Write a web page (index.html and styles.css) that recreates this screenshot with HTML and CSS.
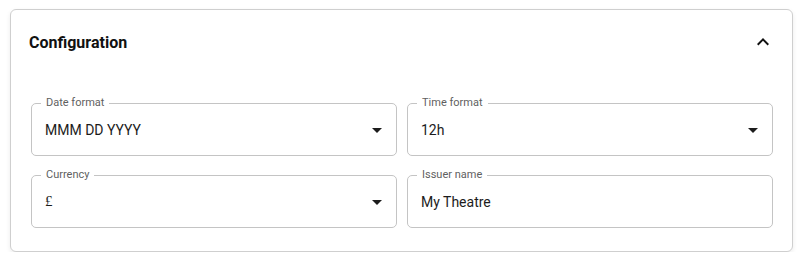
FILE: index.html
```html
<!DOCTYPE html>
<html lang="en">
<head>
    <meta charset="UTF-8">
    <meta name="viewport" content="width=device-width, initial-scale=1.0">
    <title>Configuration</title>
    <link rel="stylesheet" href="styles.css">
</head>
<body>
    <div class="panel">
        <div class="panel-header">
            <h2>Configuration</h2>
            <svg class="icon" viewBox="0 0 24 24" width="24" height="24"><path d="M12 8l-6 6 1.41 1.41L12 10.83l4.59 4.58L18 14z"/></svg>
        </div>

        <div class="panel-body">
            <div class="field">
                <label>Date format</label>
                <span class="value">MMM DD YYYY</span>
                <svg class="arrow" viewBox="0 0 24 24" width="24" height="24"><path d="M7 10l5 5 5-5z"/></svg>
            </div>

            <div class="field">
                <label>Time format</label>
                <span class="value">12h</span>
                <svg class="arrow" viewBox="0 0 24 24" width="24" height="24"><path d="M7 10l5 5 5-5z"/></svg>
            </div>

            <div class="field">
                <label>Currency</label>
                <span class="value pound">£</span>
                <svg class="arrow" viewBox="0 0 24 24" width="24" height="24"><path d="M7 10l5 5 5-5z"/></svg>
            </div>

            <div class="field">
                <label>Issuer name</label>
                <span class="value">My Theatre</span>
            </div>
        </div>
    </div>
</body>
</html>
```

FILE: styles.css
```css
body {
    margin: 0;
    padding: 9px 9px 0 10px;
    font-family: Roboto, "Liberation Sans", Arial, sans-serif;
    background-color: #fff;
    color: rgba(0,0,0,0.87);
}
.panel {
    background-color: white;
    border: 1px solid #cfcfcf;
    border-radius: 6px;
    box-shadow: 0 2px 5px rgba(0,0,0,0.08);
}
.panel-header {
    height: 64px;
    display: flex;
    align-items: center;
    justify-content: space-between;
    padding: 0 17px 0 18px;
}
h2 {
    margin: 0;
    font-size: 16px;
    font-weight: 700;
    color: #111;
}
.icon {
    fill: #111;
    display: block;
}
.panel-body {
    display: grid;
    grid-template-columns: 1fr 1fr;
    column-gap: 10px;
    row-gap: 19px;
    padding: 29px 19px 23px 20px;
}
.field {
    position: relative;
    height: 51px;
    border: 1px solid #c4c4c4;
    border-radius: 5px;
    display: flex;
    align-items: center;
    padding: 0 7px 0 13px;
}
.field label {
    position: absolute;
    top: -8px;
    left: 9px;
    padding: 0 5px;
    background-color: white;
    font-size: 11px;
    line-height: 14px;
    color: #5f5f5f;
}
.value {
    flex: 1;
    font-size: 14px;
    color: #1c1c1c;
}
.pound {
    font-family: "Liberation Serif", "Times New Roman", serif;
    font-size: 15px;
}
.arrow {
    fill: #1c1c1c;
    display: block;
}
```
